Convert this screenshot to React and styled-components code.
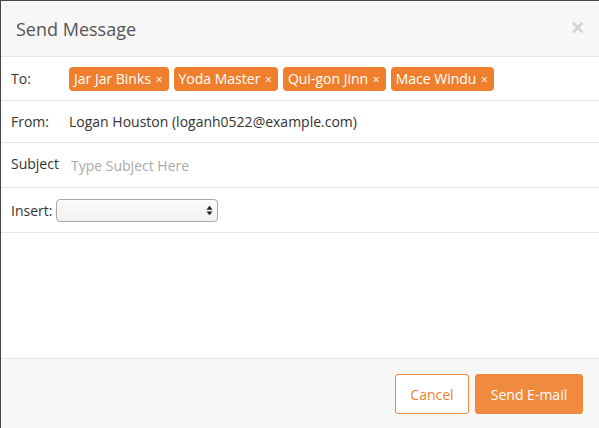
import React from "react";
import styled, { createGlobalStyle } from "styled-components";

const GlobalStyle = createGlobalStyle`
  html, body {
    margin: 0;
    padding: 0;
    height: 100%;
    background: #454545;
    overflow: hidden;
  }
  body {
    font-family: "Open Sans", "Liberation Sans", sans-serif;
    font-size: 14px;
    color: #333;
  }
`;

const recipients = ["Jar Jar Binks", "Yoda Master", "Qui-gon Jinn", "Mace Windu"];

const App = () => {
  return (
    <>
      <GlobalStyle />
      <Modal>
        <Header>
          <Title>Send Message</Title>
          <Close>×</Close>
        </Header>

        <Row height={43}>
          <Label>To:</Label>
          <Tags>
            {recipients.map((name) => (
              <Tag key={name}>
                {name} <span>×</span>
              </Tag>
            ))}
          </Tags>
        </Row>

        <Row height={41}>
          <Label>From:</Label>
          <Value>Logan Houston (loganh0522@example.com)</Value>
        </Row>

        <Row height={44}>
          <Label $raise>Subject</Label>
          <SubjectInput placeholder="Type Subject Here" />
        </Row>

        <Row height={44}>
          <InlineLabel>Insert:</InlineLabel>
          <Select>
            <Arrows viewBox="0 0 8 12" width="7" height="11">
              <path d="M4 0.5 L7.5 5 H0.5 Z M4 11.5 L0.5 7 H7.5 Z" fill="#222" />
            </Arrows>
          </Select>
        </Row>

        <Body />

        <Footer>
          <Button width={74}>Cancel</Button>
          <Button primary width={108}>Send E-mail</Button>
        </Footer>
      </Modal>
    </>
  );
};

const Modal = styled.div`
  margin: 1px 0 0 1px;
  height: calc(100vh - 1px);
  background: #fff;
  display: flex;
  flex-direction: column;
`;

const Header = styled.div`
  height: 55px;
  flex-shrink: 0;
  background: #f7f7f7;
  border-bottom: 1px solid #e5e5e5;
  display: flex;
  align-items: center;
  justify-content: space-between;
  padding: 0 15px 0 15px;
`;

const Title = styled.h4`
  margin: 0;
  font-size: 18px;
  font-weight: 400;
  color: #555;
  padding-top: 1px;
`;

const Close = styled.span`
  font-family: "Liberation Sans", sans-serif;
  font-size: 22px;
  font-weight: 700;
  color: #d2d2d2;
  line-height: 1;
  margin-top: -2px;
`;

const Row = styled.div`
  height: ${(p) => p.height}px;
  flex-shrink: 0;
  border-bottom: 1px solid #e5e5e5;
  display: flex;
  align-items: center;
  padding: 0 10px;
`;

const Label = styled.div`
  width: 58px;
  flex-shrink: 0;
  color: #333;
  margin-top: ${(p) => (p.$raise ? "-4px" : "0")};
`;

const InlineLabel = styled.div`
  color: #333;
  margin-right: 4px;
`;

const Tags = styled.div`
  display: flex;
  gap: 5px;
`;

const Tag = styled.span`
  background: #f07f2d;
  color: #fff;
  border-radius: 4px;
  height: 24px;
  line-height: 24px;
  padding: 0 6px 0 5px;
  white-space: nowrap;

  span {
    font-size: 12px;
    margin-left: 1px;
  }
`;

const Value = styled.div`
  color: #333;
`;

const SubjectInput = styled.input`
  border: none;
  outline: none;
  background: transparent;
  font-family: inherit;
  font-size: 14px;
  padding: 0 0 0 2px;
  margin-top: 1px;
  flex: 1;

  &::placeholder {
    color: #a9a9a9;
  }
`;

const Select = styled.div`
  width: 156px;
  height: 21px;
  border: 1px solid #aaa;
  border-radius: 4px;
  background: linear-gradient(#fbfbfb, #f1f1f1);
  display: flex;
  align-items: center;
  justify-content: flex-end;
  padding-right: 4px;
  box-sizing: content-box;
`;

const Arrows = styled.svg`
  display: block;
`;

const Body = styled.div`
  flex-shrink: 0;
  height: 125px;
  border-bottom: 1px solid #e5e5e5;
`;

const Footer = styled.div`
  flex: 1;
  background: #f7f7f7;
  display: flex;
  justify-content: flex-end;
  align-items: flex-start;
  gap: 6px;
  padding: 15px 16px 0 0;
`;

const Button = styled.button`
  width: ${(p) => p.width}px;
  height: 40px;
  padding: 0;
  font-family: inherit;
  font-size: 14px;
  border-radius: 3px;
  border: 1px solid #f0883e;
  background: ${(p) => (p.primary ? "#f08a3e" : "#fff")};
  color: ${(p) => (p.primary ? "#fff" : "#ee7f33")};
  cursor: pointer;
`;

export default App;
